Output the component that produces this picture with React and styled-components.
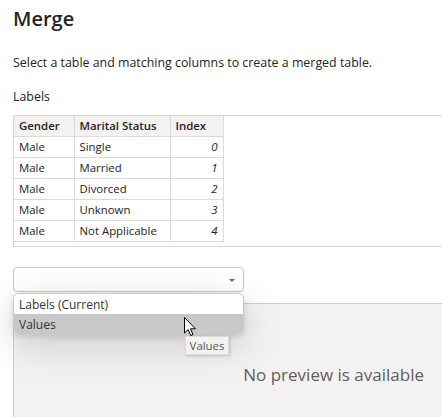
import styled, { createGlobalStyle } from 'styled-components';

const GlobalStyle = createGlobalStyle`
	html, body {
		margin: 0;
		padding: 0;
		background: #ffffff;
		overflow: hidden;
	}
	body {
		font-family: 'Open Sans', 'Noto Sans', 'Liberation Sans', sans-serif;
		color: #252423;
	}
`;

const Page = styled.div`
	width: 442px;
	height: 417px;
	overflow: hidden;
	padding-left: 13px;
	box-sizing: border-box;
`;

const Title = styled.h1`
	margin: 0;
	padding-top: 6px;
	font-size: 20px;
	line-height: 26px;
	font-weight: 600;
	color: #252423;
`;

const Description = styled.p`
	margin: 0;
	padding-top: 22px;
	font-size: 12.4px;
	line-height: 18px;
	color: #252423;
`;

const SectionLabel = styled.div`
	padding-top: 16px;
	font-size: 12.4px;
	line-height: 18px;
	color: #252423;
`;

const TableFrame = styled.div`
	margin-top: 9px;
	height: 130px;
	margin-right: -10px;
	border: 1px solid #d6d6d6;
	border-right: none;
	box-sizing: content-box;
`;

const DataTable = styled.table`
	border-collapse: collapse;
	font-size: 11.4px;
	color: #252423;
	border-right: 1px solid #dadada;
	border-bottom: 1px solid #dadada;
`;

const HeadCell = styled.th`
	background: #f3f2f1;
	font-weight: 600;
	text-align: left;
	height: 20px;
	padding: 0 5px;
	box-sizing: border-box;
	width: ${p => p.$w}px;
	border-left: 1px solid #dadada;
	&:first-child {
		border-left: none;
	}
`;

const Cell = styled.td`
	height: 21px;
	padding: 0 5px;
	box-sizing: border-box;
	border-top: 1px solid #dadada;
	border-left: 1px solid #dadada;
	text-align: ${p => (p.$num ? 'right' : 'left')};
	font-style: ${p => (p.$num ? 'italic' : 'normal')};
	&:first-child {
		border-left: none;
	}
`;

const PickerArea = styled.div`
	position: relative;
	margin-top: 20px;
	width: 231px;
`;

const SelectBox = styled.div`
	height: 25px;
	box-sizing: border-box;
	border: 1px solid #c8c8c8;
	border-radius: 4px;
	background: #fff;
	position: relative;
`;

const Caret = styled.span`
	position: absolute;
	right: 8px;
	top: 11px;
	width: 0;
	height: 0;
	border-left: 3px solid transparent;
	border-right: 3px solid transparent;
	border-top: 3px solid #6b6b6b;
`;

const Menu = styled.ul`
	position: absolute;
	z-index: 5;
	left: 0;
	top: 26px;
	width: 231px;
	margin: 0;
	padding: 0;
	list-style: none;
	box-sizing: border-box;
	border: 1px solid #c8c8c8;
	border-radius: 6px;
	background: #fff;
	overflow: hidden;
	box-shadow: 0 10px 40px rgba(0, 0, 0, 0.16), 0 2px 6px rgba(0, 0, 0, 0.12);
`;

const MenuItem = styled.li`
	height: 20px;
	line-height: 21px;
	padding: 0 5px;
	font-size: 12px;
	color: #333;
	background: ${p => (p.$hover ? '#c8c8c8' : '#fff')};
`;

const Pointer = styled.svg`
	position: absolute;
	z-index: 6;
	left: 171px;
	top: 50px;
`;

const Tooltip = styled.div`
	position: absolute;
	z-index: 6;
	left: 172px;
	top: 69px;
	width: 44px;
	height: 19px;
	box-sizing: border-box;
	background: #f2f2f2;
	border: 1px solid #dcdcdc;
	box-shadow: 1px 1px 3px rgba(0, 0, 0, 0.18);
	font-size: 11.4px;
	line-height: 17px;
	text-align: center;
	color: #555;
`;

const Preview = styled.div`
	margin-top: 11px;
	margin-right: -10px;
	height: 140px;
	background: #f3f2f1;
	border-top: 1px solid #cfcfcf;
	border-left: 1px solid #cfcfcf;
	display: flex;
	align-items: center;
	justify-content: flex-end;
	padding-right: 28px;
	padding-top: 2px;
	box-sizing: border-box;
`;

const EmptyText = styled.span`
	font-size: 17px;
	color: #605e5c;
`;

const rows = [
	['Male', 'Single', 0],
	['Male', 'Married', 1],
	['Male', 'Divorced', 2],
	['Male', 'Unknown', 3],
	['Male', 'Not Applicable', 4],
];

const App = () => {
	return (
		<Page>
			<GlobalStyle />
			<Title>Merge</Title>
			<Description>Select a table and matching columns to create a merged table.</Description>
			<SectionLabel>Labels</SectionLabel>
			<TableFrame>
				<DataTable>
					<thead>
						<tr>
							<HeadCell $w={60}>Gender</HeadCell>
							<HeadCell $w={96}>Marital Status</HeadCell>
							<HeadCell $w={53}>Index</HeadCell>
						</tr>
					</thead>
					<tbody>
						{rows.map(r => (
							<tr key={r[2]}>
								<Cell>{r[0]}</Cell>
								<Cell>{r[1]}</Cell>
								<Cell $num>{r[2]}</Cell>
							</tr>
						))}
					</tbody>
				</DataTable>
			</TableFrame>
			<PickerArea>
				<SelectBox>
					<Caret />
				</SelectBox>
				<Menu>
					<MenuItem>Labels (Current)</MenuItem>
					<MenuItem $hover>Values</MenuItem>
				</Menu>
				<Pointer width="13" height="20" viewBox="0 0 13 20">
					<path
						d="M0.5 0.5 L0.5 16 L4.2 12.6 L6.8 18.6 L9 17.6 L6.5 11.8 L11.5 11.8 Z"
						fill="#fff"
						stroke="#000"
						strokeWidth="1"
						strokeLinejoin="round"
					/>
				</Pointer>
				<Tooltip>Values</Tooltip>
			</PickerArea>
			<Preview>
				<EmptyText>No preview is available</EmptyText>
			</Preview>
		</Page>
	);
};

export default App;
